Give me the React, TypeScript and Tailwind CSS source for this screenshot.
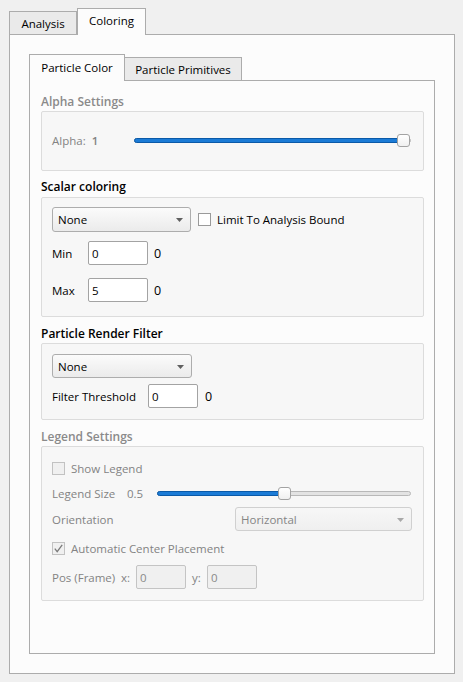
import React from "react";

const FONT = "font-['Open_Sans',sans-serif]";

function Arrow({ disabled }: { disabled?: boolean }) {
  return (
    <svg width="7" height="4" viewBox="0 0 7 4" className="shrink-0">
      <path d="M0 0 H7 L3.5 4 Z" fill={disabled ? "#a8a8a8" : "#606060"} />
    </svg>
  );
}

function Combo({ text, className, disabled }: { text: string; className: string; disabled?: boolean }) {
  return (
    <div
      className={
        "flex items-center justify-between pl-[5px] pr-[7px] pt-px rounded-[3px] border " +
        (disabled
          ? "border-[#d0d0d0] bg-gradient-to-b from-[#f7f7f7] to-[#efefef] text-[#858585] "
          : "border-[#adadad] bg-gradient-to-b from-[#fbfbfb] to-[#ebebeb] text-black ") +
        className
      }
    >
      <span>{text}</span>
      <Arrow disabled={disabled} />
    </div>
  );
}

function Input({ value, className, disabled }: { value: string; className: string; disabled?: boolean }) {
  return (
    <div
      className={
        "h-[24px] flex items-center pl-[3px] pt-px rounded-[2px] border " +
        (disabled ? "border-[#c4c4c4] bg-[#f0f0f0] text-[#8a8a8a] " : "border-[#a3a3a3] bg-white text-black ") +
        className
      }
    >
      {value}
    </div>
  );
}

function Check({ checked, disabled }: { checked?: boolean; disabled?: boolean }) {
  return (
    <div
      className={
        "w-[13px] h-[13px] shrink-0 border flex items-center justify-center " +
        (disabled ? "border-[#c2c2c2] bg-[#f0f0f0]" : "border-[#9a9a9a] bg-white")
      }
    >
      {checked && (
        <svg width="11" height="11" viewBox="0 0 11 11">
          <path d="M1.8 5.6 L4.2 8.6 L9.2 1.8" fill="none" stroke={disabled ? "#7a7a7a" : "#222"} strokeWidth="1.3" />
        </svg>
      )}
    </div>
  );
}

function Slider({ className, fill }: { className: string; fill: number }) {
  return (
    <div className={"relative h-[13px] " + className}>
      <div className="absolute left-0 right-0 top-[4px] h-[5px] rounded-full border border-[#b8b8b8] bg-[#e3e3e3]" />
      <div
        className="absolute left-0 top-[4px] h-[5px] rounded-full border border-[#0b5aa8] bg-[#1b7bd6]"
        style={{ width: fill + 2 }}
      />
      <div
        className="absolute top-0 w-[13px] h-[13px] rounded-[3px] border border-[#a3a3a3] bg-gradient-to-b from-white to-[#f0f0f0]"
        style={{ left: fill - 1 }}
      />
    </div>
  );
}

function Title({ text, disabled, pt }: { text: string; disabled?: boolean; pt: string }) {
  return (
    <div className={"leading-[16px] font-semibold text-[12px] " + pt + (disabled ? " text-[#8a8a8a]" : " text-black")}>{text}</div>
  );
}

export default function App() {
  return (
    <div className={"w-[463px] h-[682px] bg-[#f0f0f0] pt-[8px] pl-[9px] text-[11.5px] text-black " + FONT}>
      {/* outer tabs */}
      <div className="flex h-[26px]">
        <div className="self-end h-[23px] w-[68px] border border-b-0 border-[#acacac] bg-[#eaeaea] flex items-center justify-center pt-px">
          Analysis
        </div>
        <div className="relative z-10 h-[27px] w-[69px] border border-b-0 border-[#acacac] bg-[#fcfcfc] flex items-center justify-center pb-[2px]">
          Coloring
        </div>
      </div>
      {/* outer panel */}
      <div className="w-[446px] h-[640px] border border-[#acacac] bg-[#fcfcfc] pt-[19px] pl-[19px]">
        {/* inner tabs */}
        <div className="flex h-[26px]">
          <div className="relative z-10 h-[27px] w-[96px] border border-b-0 border-[#acacac] bg-[#fcfcfc] flex items-center justify-center pb-[1px]">
            Particle Color
          </div>
          <div className="self-end h-[23px] w-[117px] border border-b-0 border-l-0 border-[#acacac] bg-[#eaeaea] flex items-center justify-center pt-px">
            Particle Primitives
          </div>
        </div>
        {/* inner panel */}
        <div className="w-[406px] h-[574px] border border-[#acacac] bg-[#fcfcfc] pl-[11px] flex flex-col">
          <div className="h-[30px]">
            <Title text="Alpha Settings" disabled pt="pt-[13px]" />
          </div>
          <div className="w-[383px] h-[60px] border border-[#dcdcdc] rounded-[2px] bg-[#f7f7f7] pl-[10px] pb-[2px] flex items-center text-[#838383]">
            <div className="w-[82px] flex items-center gap-[6px] pt-px">
              <span>Alpha:</span>
              <span className="font-semibold">1</span>
            </div>
            <Slider className="w-[277px]" fill={264} />
          </div>

          <div className="h-[26px]">
            <Title text="Scalar coloring" pt="pt-[8px]" />
          </div>
          <div className="w-[383px] h-[120px] border border-[#dcdcdc] rounded-[2px] bg-[#f7f7f7] pl-[10px] pt-[9px] flex flex-col">
            <div className="flex items-center">
              <Combo text="None" className="w-[139px] h-[25px]" />
              <div className="ml-[7px]">
                <Check />
              </div>
              <span className="ml-[6px] pt-px">Limit To Analysis Bound</span>
            </div>
            <div className="flex items-center mt-[9px]">
              <span className="w-[36px] pt-[2px]">Min</span>
              <Input value="0" className="w-[60px]" />
              <span className="ml-[6px] pt-[2px] text-[12.5px]">0</span>
            </div>
            <div className="flex items-center mt-[13px]">
              <span className="w-[36px] pt-[2px]">Max</span>
              <Input value="5" className="w-[60px]" />
              <span className="ml-[6px] pt-[2px] text-[12.5px]">0</span>
            </div>
          </div>

          <div className="h-[26px]">
            <Title text="Particle Render Filter" pt="pt-[9px]" />
          </div>
          <div className="w-[383px] h-[77px] border border-[#dcdcdc] rounded-[2px] bg-[#f7f7f7] pl-[10px] pt-[10px] flex flex-col">
            <Combo text="None" className="w-[140px] h-[24px]" />
            <div className="flex items-center mt-[6px]">
              <span className="w-[96px] pt-[2px]">Filter Threshold</span>
              <Input value="0" className="w-[50px]" />
              <span className="ml-[7px] pt-[2px] text-[12.5px]">0</span>
            </div>
          </div>

          <div className="h-[26px]">
            <Title text="Legend Settings" disabled pt="pt-[9px]" />
          </div>
          <div className="w-[383px] h-[155px] border border-[#dcdcdc] rounded-[2px] bg-[#f7f7f7] pl-[10px] pt-[9px] flex flex-col text-[#838383]">
            <div className="h-[25px] flex items-center">
              <Check disabled />
              <span className="ml-[6px] pt-px">Show Legend</span>
            </div>
            <div className="h-[24px] flex items-center">
              <span className="w-[75px] pt-px">Legend Size</span>
              <span className="w-[30px] pt-px">0.5</span>
              <Slider className="w-[254px]" fill={122} />
            </div>
            <div className="h-[28px] flex items-center justify-between pr-[11px]">
              <span className="pt-px">Orientation</span>
              <Combo text="Horizontal" disabled className="w-[177px] h-[24px]" />
            </div>
            <div className="h-[31px] flex items-center">
              <Check checked disabled />
              <span className="ml-[6px] pt-px">Automatic Center Placement</span>
            </div>
            <div className="h-[26px] flex items-center">
              <span className="w-[69px] pt-px">Pos (Frame)</span>
              <span className="w-[15px] pt-px">x:</span>
              <Input value="0" disabled className="w-[50px]" />
              <span className="ml-[6px] w-[15px] pt-px">y:</span>
              <Input value="0" disabled className="w-[50px]" />
            </div>
          </div>
        </div>
      </div>
    </div>
  );
}
